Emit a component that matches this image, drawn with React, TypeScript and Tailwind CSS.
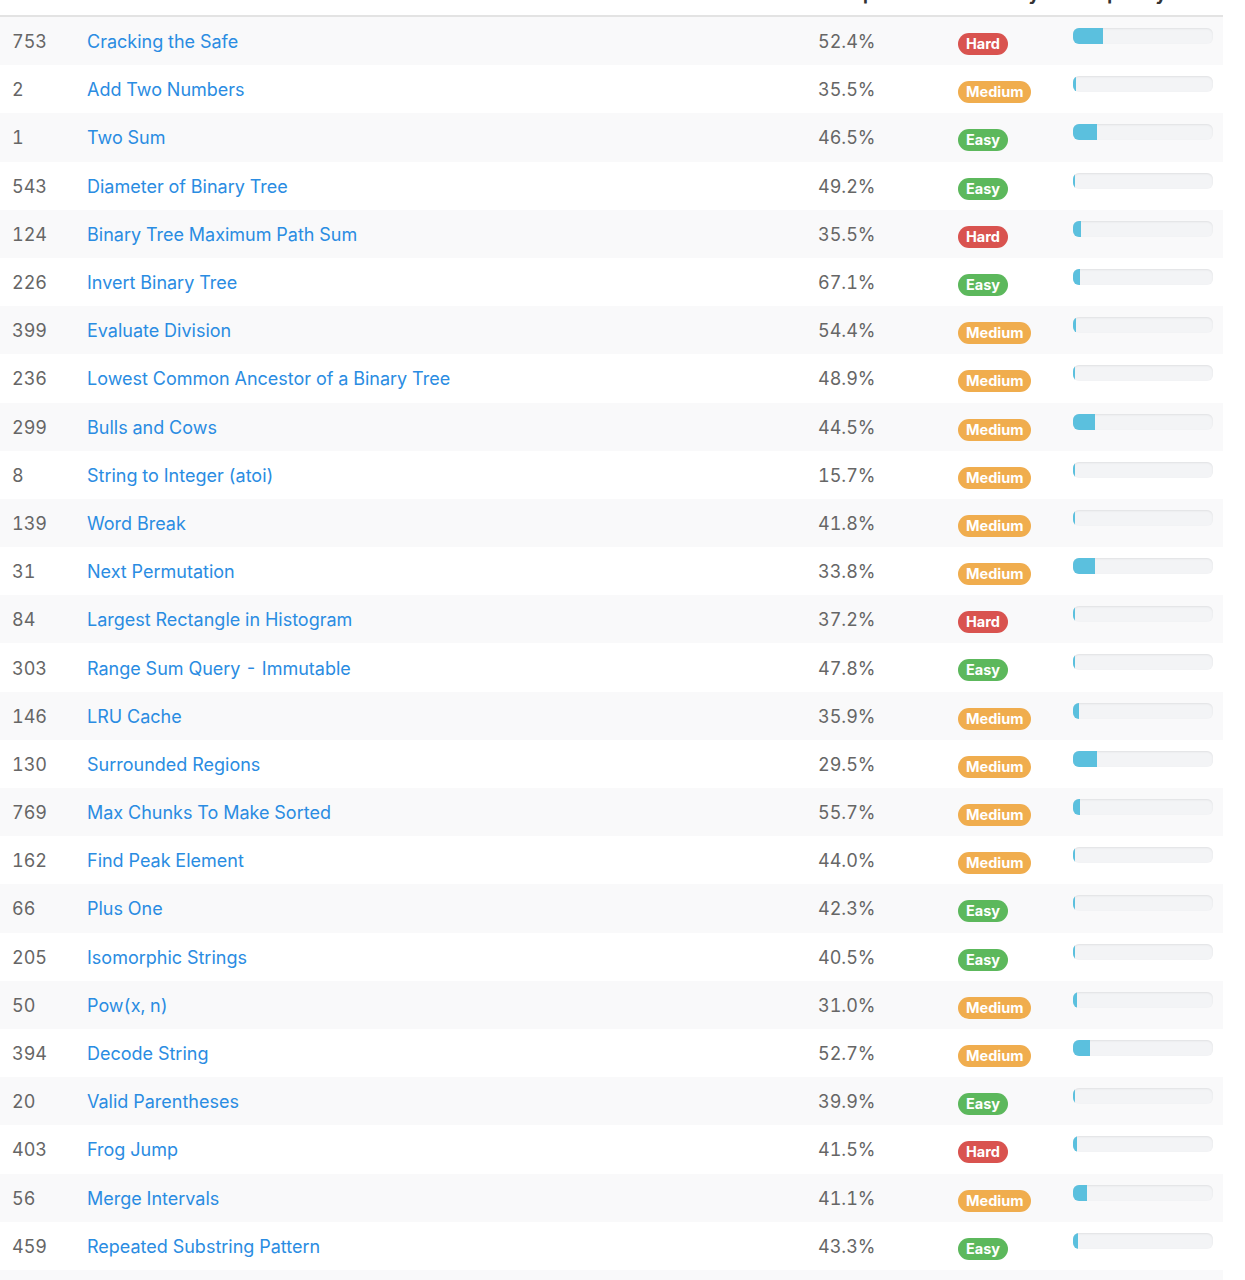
import React from 'react';

type Level = 'Easy' | 'Medium' | 'Hard';

interface Problem {
  id: number;
  title: string;
  acceptance: string;
  difficulty: Level;
  freq: number; // fill width in px out of 140
}

const problems: Problem[] = [
  { id: 753, title: 'Cracking the Safe', acceptance: '52.4%', difficulty: 'Hard', freq: 30 },
  { id: 2, title: 'Add Two Numbers', acceptance: '35.5%', difficulty: 'Medium', freq: 3 },
  { id: 1, title: 'Two Sum', acceptance: '46.5%', difficulty: 'Easy', freq: 24 },
  { id: 543, title: 'Diameter of Binary Tree', acceptance: '49.2%', difficulty: 'Easy', freq: 2 },
  { id: 124, title: 'Binary Tree Maximum Path Sum', acceptance: '35.5%', difficulty: 'Hard', freq: 8 },
  { id: 226, title: 'Invert Binary Tree', acceptance: '67.1%', difficulty: 'Easy', freq: 7 },
  { id: 399, title: 'Evaluate Division', acceptance: '54.4%', difficulty: 'Medium', freq: 3 },
  { id: 236, title: 'Lowest Common Ancestor of a Binary Tree', acceptance: '48.9%', difficulty: 'Medium', freq: 2 },
  { id: 299, title: 'Bulls and Cows', acceptance: '44.5%', difficulty: 'Medium', freq: 22 },
  { id: 8, title: 'String to Integer (atoi)', acceptance: '15.7%', difficulty: 'Medium', freq: 2 },
  { id: 139, title: 'Word Break', acceptance: '41.8%', difficulty: 'Medium', freq: 2 },
  { id: 31, title: 'Next Permutation', acceptance: '33.8%', difficulty: 'Medium', freq: 22 },
  { id: 84, title: 'Largest Rectangle in Histogram', acceptance: '37.2%', difficulty: 'Hard', freq: 2 },
  { id: 303, title: 'Range Sum Query - Immutable', acceptance: '47.8%', difficulty: 'Easy', freq: 2 },
  { id: 146, title: 'LRU Cache', acceptance: '35.9%', difficulty: 'Medium', freq: 6 },
  { id: 130, title: 'Surrounded Regions', acceptance: '29.5%', difficulty: 'Medium', freq: 24 },
  { id: 769, title: 'Max Chunks To Make Sorted', acceptance: '55.7%', difficulty: 'Medium', freq: 7 },
  { id: 162, title: 'Find Peak Element', acceptance: '44.0%', difficulty: 'Medium', freq: 2 },
  { id: 66, title: 'Plus One', acceptance: '42.3%', difficulty: 'Easy', freq: 2 },
  { id: 205, title: 'Isomorphic Strings', acceptance: '40.5%', difficulty: 'Easy', freq: 2 },
  { id: 50, title: 'Pow(x, n)', acceptance: '31.0%', difficulty: 'Medium', freq: 4 },
  { id: 394, title: 'Decode String', acceptance: '52.7%', difficulty: 'Medium', freq: 17 },
  { id: 20, title: 'Valid Parentheses', acceptance: '39.9%', difficulty: 'Easy', freq: 2 },
  { id: 403, title: 'Frog Jump', acceptance: '41.5%', difficulty: 'Hard', freq: 4 },
  { id: 56, title: 'Merge Intervals', acceptance: '41.1%', difficulty: 'Medium', freq: 14 },
  { id: 459, title: 'Repeated Substring Pattern', acceptance: '43.3%', difficulty: 'Easy', freq: 5 },
  { id: 42, title: 'Trapping Rain Water', acceptance: '40.6%', difficulty: 'Hard', freq: 10 },
];

const badgeColor: Record<Level, string> = {
  Easy: 'bg-[#5cb85c]',
  Medium: 'bg-[#f0ad4e]',
  Hard: 'bg-[#d9534f]',
};

const cols = 'grid grid-cols-[75px_731px_140px_115px_162px]';

function Badge({ level }: { level: Level }) {
  return (
    <span
      className={`${badgeColor[level]} block h-[22px] rounded-full px-2 text-[14.5px] leading-[22px] font-bold text-white`}
    >
      {level}
    </span>
  );
}

function FreqBar({ px }: { px: number }) {
  return (
    <div className="h-[16px] w-[140px] shrink-0 overflow-hidden rounded-[6px] bg-[#f3f4f6] shadow-[inset_0_1px_2px_rgba(0,0,0,0.08)]">
      <div className="h-full bg-[#5bc0de]" style={{ width: `${(px / 140) * 100}%` }} />
    </div>
  );
}

export default function App() {
  return (
    <div className="min-h-screen bg-white font-['Inter','Helvetica',sans-serif] text-[18px] tabular-nums">
      <div className="-mt-[27px] w-[1223px]">
        <div className={`${cols} h-[44px] border-b-2 border-[#e3e3e3] pb-[9px] font-bold leading-[24px] text-[#333]`}>
          <div className="self-end px-3">#</div>
          <div className="self-end px-3">Title</div>
          <div className="self-end px-3">Acceptance</div>
          <div className="self-end px-3">Difficulty</div>
          <div className="self-end px-3">Frequency</div>
        </div>

        {problems.map((p, i) => (
          <div key={p.id} className={`${cols} h-[48.2px] ${i % 2 === 0 ? 'bg-[#f9f9fa]' : 'bg-white'}`}>
            <div className="flex items-center px-3 pt-[1px] text-[#666]">{p.id}</div>
            <div className="flex items-center px-3 pt-[1px]">
              <a href="#" className="text-[#2a8ce2]">
                {p.title}
              </a>
            </div>
            <div className="flex items-center px-3 pt-[1px] text-[#666]">{p.acceptance}</div>
            <div className="flex items-start px-3 pt-[16px]">
              <Badge level={p.difficulty} />
            </div>
            <div className="flex items-start pl-3 pt-[11px]">
              <FreqBar px={p.freq} />
            </div>
          </div>
        ))}
      </div>
    </div>
  );
}
